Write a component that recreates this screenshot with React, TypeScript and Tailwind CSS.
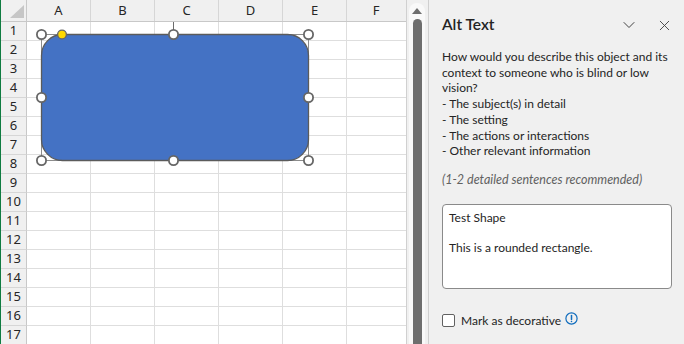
import { X, ChevronDown } from 'lucide-react';

const cols = ['A', 'B', 'C', 'D', 'E'];
const rows = Array.from({ length: 17 }, (_, i) => i + 1);

function SelectedShape() {
  const handles: [number, number][] = [
    [40.5, 34.5], [172.5, 34.5], [307.5, 34.5],
    [40.5, 97.5], [307.5, 97.5],
    [40.5, 160.5], [172.5, 160.5], [307.5, 160.5],
  ];
  return (
    <svg className="absolute left-0 top-0 pointer-events-none" width="406" height="344">
      {/* rotate handle stem */}
      <line x1="172.5" y1="22" x2="172.5" y2="30" stroke="#6b6b6b" strokeWidth="1" />
      {/* selection frame */}
      <rect x="40.5" y="34.5" width="267" height="126" fill="none" stroke="#8c8c8c" strokeWidth="1" />
      <rect x="40.5" y="34.5" width="267" height="126" rx="21" fill="#4472c4" stroke="#5b5b5b" strokeWidth="1.3" />
      {handles.map(([x, y]) => (
        <circle key={`${x}-${y}`} cx={x} cy={y} r="4.6" fill="#ffffff" stroke="#666666" strokeWidth="1.8" />
      ))}
      <circle cx="61" cy="34.5" r="4.4" fill="#ffd800" stroke="#666666" strokeWidth="1.4" />
    </svg>
  );
}

function Sheet() {
  return (
    <div className="relative w-[406px] shrink-0 h-full overflow-hidden bg-white border-l border-[#107c41] font-['Noto_Sans',sans-serif]">
      {/* column headers */}
      <div className="flex h-[22px] bg-[#f0f0f0] border-b border-[#c8c8c8]">
        <div className="relative w-[26px] shrink-0 border-r border-[#c8c8c8]">
          <svg className="absolute left-[9px] top-[5px]" width="14" height="13">
            <polygon points="14,0 14,13 0,13" fill="#c6c6c6" />
          </svg>
        </div>
        {cols.map((c) => (
          <div
            key={c}
            className="w-[64px] shrink-0 border-r border-[#d6d6d6] flex items-center justify-center text-[13px] text-[#262626]"
          >
            {c}
          </div>
        ))}
        <div className="flex-1 flex items-center justify-center text-[13px] text-[#262626] pr-[1px]">F</div>
      </div>
      {rows.map((r) => (
        <div key={r} className="flex h-[19px] border-b border-[#dedede]">
          <div className="w-[26px] shrink-0 bg-[#f0f0f0] border-r border-[#c8c8c8] flex items-center justify-center text-[13px] text-[#262626] border-b border-b-[#d6d6d6] -mb-px">
            {r}
          </div>
          {cols.map((c) => (
            <div key={c} className="w-[64px] shrink-0 border-r border-[#dedede]" />
          ))}
          <div className="flex-1" />
        </div>
      ))}
      <SelectedShape />
    </div>
  );
}

function ScrollBar() {
  return (
    <div className="w-[23px] h-full shrink-0 bg-[#f0f0f0] border-l border-[#d0d0d0] border-r border-r-[#cfcfcf] pl-[2px] pr-[2px] pt-[3px]">
      <div className="h-full w-[16px] rounded-t-[8px] bg-[#f9f9f9] flex flex-col items-center pt-[5px]">
        <svg width="10" height="6">
          <polygon points="5,0 10,6 0,6" fill="#6e6e6e" />
        </svg>
        <div className="mt-[5px] w-[9px] flex-1 rounded-t-[5px] bg-[#6e6e6e]" />
      </div>
    </div>
  );
}

function AltTextPane() {
  return (
    <div className="flex-1 min-w-0 h-full bg-[#f0f0f0] pl-[13px] pr-[11px] text-[#242424] font-['Lato',sans-serif] whitespace-nowrap">
      <div className="mt-[13px] h-[24px] flex items-center justify-between">
        <span className="text-[15.5px] font-semibold">Alt Text</span>
        <div className="flex items-center gap-[17px] text-[#424242]">
          <ChevronDown size={20} strokeWidth={1.2} />
          <X size={17} strokeWidth={1.3} />
        </div>
      </div>
      <div className="mt-[12px] text-[12px] leading-[15.7px]">
        <div>How would you describe this object and its</div>
        <div>context to someone who is blind or low</div>
        <div>vision?</div>
        <div>- The subject(s) in detail</div>
        <div>- The setting</div>
        <div>- The actions or interactions</div>
        <div>- Other relevant information</div>
      </div>
      <div className="mt-[13px] text-[12.5px] leading-[16px] italic text-[#616161]">
        (1-2 detailed sentences recommended)
      </div>
      <div className="mt-[16px] w-[230px] h-[85px] bg-white border border-[#8a8a8a] rounded-[4px] pl-[6px] pt-[5px] text-[12px] leading-[15px]">
        <div>Test Shape</div>
        <div>&nbsp;</div>
        <div>This is a rounded rectangle.</div>
      </div>
      <div className="mt-[24px] flex items-center">
        <div className="w-[13px] h-[13px] bg-white border border-[#616161] rounded-[2px]" />
        <span className="ml-[6px] text-[12px] leading-[16px]">Mark as decorative</span>
        <svg className="ml-[4px] -mt-[5px]" width="13" height="13" viewBox="0 0 13 13">
          <circle cx="6.5" cy="6.5" r="5.6" fill="none" stroke="#0f6cbd" strokeWidth="1.2" />
          <line x1="6.5" y1="3.6" x2="6.5" y2="7.6" stroke="#0f6cbd" strokeWidth="1.5" strokeLinecap="round" />
          <circle cx="6.5" cy="9.5" r="0.8" fill="#0f6cbd" />
        </svg>
      </div>
    </div>
  );
}

export default function App() {
  return (
    <div className="flex w-[684px] h-[344px] overflow-hidden bg-[#f0f0f0]">
      <Sheet />
      <ScrollBar />
      <AltTextPane />
    </div>
  );
}
